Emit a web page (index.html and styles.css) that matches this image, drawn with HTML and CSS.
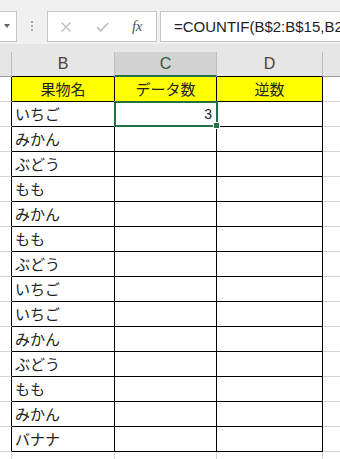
FILE: index.html
```html
<!DOCTYPE html>
<html lang="ja">
<head>
<meta charset="utf-8">
<link rel="stylesheet" href="styles.css">
</head>
<body>
<div class="toolbar">
  <div class="namebox"><span class="caret"></span></div>
  <div class="grip"><i></i><i></i><i></i></div>
  <div class="fbtns">
    <svg class="ic-x" width="10" height="10" viewBox="0 0 10 10"><path d="M0.5 0.5L9.5 9.5M9.5 0.5L0.5 9.5" stroke="#bdbdbd" stroke-width="1.4" fill="none"/></svg>
    <svg class="ic-check" width="13" height="10" viewBox="0 0 13 10"><path d="M1 5.2L4.6 8.8L12.2 1" stroke="#bdbdbd" stroke-width="1.7" fill="none"/></svg>
    <span class="fx">fx</span>
  </div>
  <div class="finput">=COUNTIF(B$2:B$15,B2</div>
</div>
<div class="headgap"></div>
<div class="sheet">
  <div class="h ha"></div><div class="h hb">B</div><div class="h hc">C</div><div class="h hd">D</div><div class="h he"></div>

  <div class="a"></div><div class="t y">果物名</div><div class="t y">データ数</div><div class="t y">逆数</div><div class="e"></div>

  <div class="a"></div><div class="t l">いちご</div><div class="t n sel">3<span class="selbox"><span class="handle"></span></span></div><div class="t"></div><div class="e"></div>
  <div class="a"></div><div class="t l">みかん</div><div class="t"></div><div class="t"></div><div class="e"></div>
  <div class="a"></div><div class="t l">ぶどう</div><div class="t"></div><div class="t"></div><div class="e"></div>
  <div class="a"></div><div class="t l">もも</div><div class="t"></div><div class="t"></div><div class="e"></div>
  <div class="a"></div><div class="t l">みかん</div><div class="t"></div><div class="t"></div><div class="e"></div>
  <div class="a"></div><div class="t l">もも</div><div class="t"></div><div class="t"></div><div class="e"></div>
  <div class="a"></div><div class="t l">ぶどう</div><div class="t"></div><div class="t"></div><div class="e"></div>
  <div class="a"></div><div class="t l">いちご</div><div class="t"></div><div class="t"></div><div class="e"></div>
  <div class="a"></div><div class="t l">いちご</div><div class="t"></div><div class="t"></div><div class="e"></div>
  <div class="a"></div><div class="t l">みかん</div><div class="t"></div><div class="t"></div><div class="e"></div>
  <div class="a"></div><div class="t l">ぶどう</div><div class="t"></div><div class="t"></div><div class="e"></div>
  <div class="a"></div><div class="t l">もも</div><div class="t"></div><div class="t"></div><div class="e"></div>
  <div class="a"></div><div class="t l">みかん</div><div class="t"></div><div class="t"></div><div class="e"></div>
  <div class="a"></div><div class="t l">バナナ</div><div class="t"></div><div class="t"></div><div class="e"></div>

  <div class="g"></div><div class="g"></div><div class="g"></div><div class="g"></div><div class="g ge"></div>
</div>
</body>
</html>
```

FILE: styles.css
```css
html, body {
  margin: 0;
  padding: 0;
  background: #ffffff;
  overflow: hidden;
}
body {
  width: 340px;
  height: 459px;
  font-family: "Liberation Sans", Arial, sans-serif;
}
.toolbar {
  height: 44px;
  box-sizing: border-box;
  padding-top: 11px;
  background: #f0f0f0;
  display: flex;
  align-items: flex-start;
}
.namebox {
  width: 17px;
  height: 31px;
  box-sizing: border-box;
  background: #fff;
  border: 1px solid #c6c6c6;
  border-left: none;
  padding: 12px 0 0 4px;
}
.caret {
  display: block;
  width: 0;
  height: 0;
  border-left: 3px solid transparent;
  border-right: 3px solid transparent;
  border-top: 4px solid #666;
}
.grip {
  margin-left: 14px;
  padding-top: 10px;
  display: flex;
  flex-direction: column;
  gap: 2px;
}
.grip i {
  display: block;
  width: 2px;
  height: 2px;
  background: #a6a6a6;
}
.fbtns {
  margin-left: 14px;
  width: 110px;
  height: 31px;
  box-sizing: border-box;
  background: #fff;
  border: 1px solid #c6c6c6;
  display: flex;
  align-items: center;
}
.ic-x { margin-left: 13px; display: block; }
.ic-check { margin-left: 25px; display: block; }
.fx {
  margin-left: 23px;
  font-family: "Liberation Serif", "Times New Roman", serif;
  font-style: italic;
  font-size: 15px;
  color: #555;
  line-height: 1;
  letter-spacing: -0.5px;
}
.finput {
  margin-left: 3px;
  flex: 1;
  height: 31px;
  box-sizing: border-box;
  background: #fff;
  border: 1px solid #c6c6c6;
  border-right: none;
  padding-left: 13px;
  font-size: 15px;
  line-height: 29px;
  color: #222;
  white-space: nowrap;
  overflow: hidden;
}
.headgap {
  height: 8px;
  background: #e6e6e6;
}
.sheet {
  display: grid;
  grid-template-columns: 12px 103px 102px 106px 1fr;
  grid-auto-rows: 25px;
}
.sheet > div {
  box-sizing: border-box;
}
.h {
  background: #e6e6e6;
  border-right: 1px solid #bdbdbd;
  border-bottom: 1px solid #9e9e9e;
  font-size: 16px;
  line-height: 24px;
  text-align: center;
  color: #444;
}
.hb, .hd {
  border-bottom-color: #000;
}
.hc {
  background: #d2d2d2;
  color: #2a5a41;
  border-bottom: 2px solid #217346;
  line-height: 23px;
}
.he { border-right: none; }
.a {
  border-right: 1px solid #000;
  border-bottom: 1px solid #d4d4d4;
}
.e {
  border-bottom: 1px solid #d4d4d4;
}
.t {
  border-right: 1px solid #000;
  border-bottom: 1px solid #000;
  font-family: "Noto Sans CJK JP", sans-serif;
  font-size: 15px;
  line-height: 24px;
  color: #222;
  white-space: nowrap;
  overflow: visible;
}
.y {
  background: #ffff00;
  text-align: center;
}
.l {
  padding-left: 3px;
}
.n {
  font-family: "Liberation Sans", Arial, sans-serif;
  font-size: 14px;
  text-align: right;
  padding-right: 4px;
}
.sel {
  position: relative;
}
.selbox {
  position: absolute;
  left: -1px;
  top: -1px;
  right: -2px;
  bottom: -1px;
  border: 2px solid #217346;
}
.handle {
  position: absolute;
  right: -3px;
  bottom: -3px;
  width: 5px;
  height: 5px;
  background: #217346;
  box-shadow: 0 0 0 1px #fff;
}
.g {
  border-right: 1px solid #d4d4d4;
  border-bottom: 1px solid #d4d4d4;
}
.ge { border-right: none; }
```
